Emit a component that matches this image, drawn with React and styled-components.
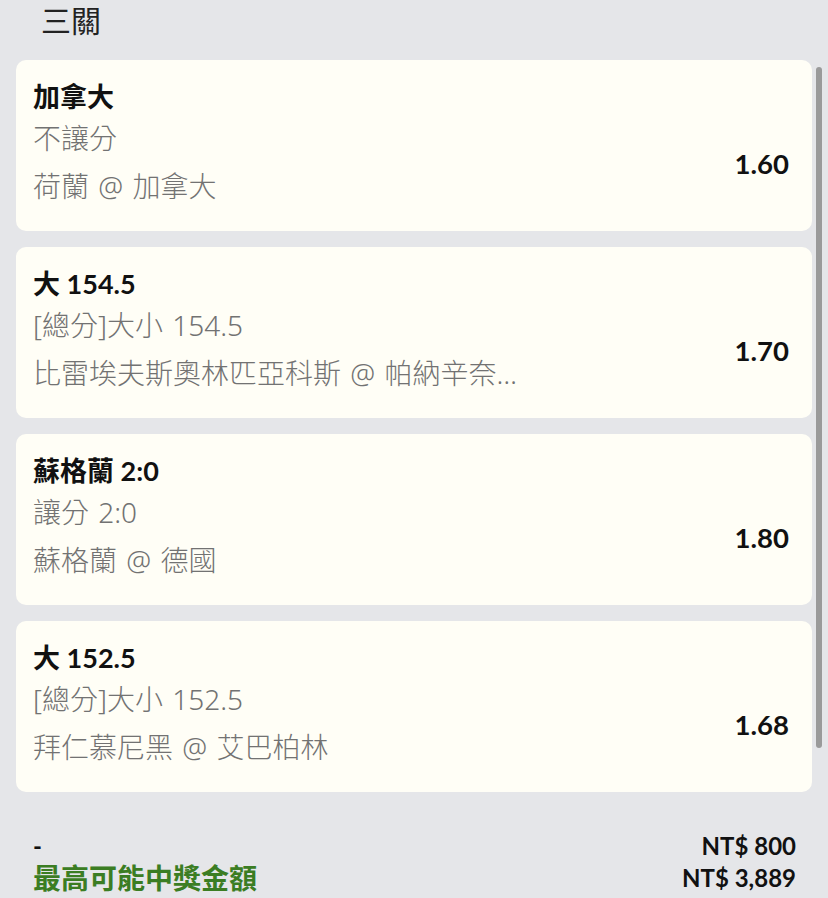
import React from "react";
import styled, { createGlobalStyle } from "styled-components";

const Global = createGlobalStyle`
  html, body { margin: 0; padding: 0; background: #e5e6e9; }
  body { font-family: "Lato", "Noto Sans CJK TC", sans-serif; overflow: hidden; }
`;

const Page = styled.div`
  position: relative;
  width: 828px;
  height: 898px;
  box-sizing: border-box;
  padding: 0 16px;
  background: #e5e6e9;
  overflow: hidden;
`;

const Title = styled.div`
  padding-left: 25px;
  height: 40px;
  line-height: 40px;
  font-size: 30px;
  color: #222;
  margin-bottom: 20px;
`;

const List = styled.div`
  display: flex;
  flex-direction: column;
  gap: 16px;
`;

const Card = styled.div`
  height: 171px;
  box-sizing: border-box;
  padding: 18px 23px 0 17px;
  background: #fffef6;
  border-radius: 10px;
  display: flex;
  flex-direction: column;
`;

const Selection = styled.div`
  font-size: 27px;
  font-weight: 700;
  line-height: 38px;
  color: #111;
`;

const Body = styled.div`
  display: flex;
  align-items: center;
  justify-content: space-between;
`;

const Info = styled.div`
  display: flex;
  flex-direction: column;
  gap: 4px;
  width: ${(p) => p.$w || 600}px;
`;

const Line = styled.div`
  font-family: "Noto Sans", "Noto Sans CJK TC", sans-serif;
  font-weight: 300;
  font-size: 28px;
  line-height: 44px;
  word-spacing: 2px;
  color: #727272;
  white-space: nowrap;
  overflow: hidden;
  text-overflow: ellipsis;
`;

const Odds = styled.div`
  font-size: 27.5px;
  font-weight: 700;
  color: #111;
  padding-top: 3px;
`;

const Summary = styled.div`
  margin-top: 37px;
  padding: 0 16px 0 17px;
  display: flex;
  flex-direction: column;
`;

const Row = styled.div`
  display: flex;
  justify-content: space-between;
  align-items: center;
  height: 32px;
`;

const Label = styled.div`
  font-size: ${(p) => (p.$green ? 28 : 24)}px;
  font-weight: 700;
  color: ${(p) => (p.$green ? "#3b7d23" : "#111")};
`;

const Amount = styled.div`
  font-size: 24px;
  font-weight: 700;
  color: #111;
`;

const Scrollbar = styled.div`
  position: absolute;
  right: 6px;
  top: 67px;
  width: 6px;
  height: 681px;
  border-radius: 3px;
  background: #9a9a9a;
`;

const bets = [
  { sel: "加拿大", market: "不讓分", match: "荷蘭 @ 加拿大", odds: "1.60" },
  { sel: "大 154.5", market: "[總分]大小 154.5", match: "比雷埃夫斯奧林匹亞科斯 @ 帕納辛奈科斯", odds: "1.70", w: 500 },
  { sel: "蘇格蘭 2:0", market: "讓分 2:0", match: "蘇格蘭 @ 德國", odds: "1.80" },
  { sel: "大 152.5", market: "[總分]大小 152.5", match: "拜仁慕尼黑 @ 艾巴柏林", odds: "1.68" },
];

export default function App() {
  return (
    <Page>
      <Global />
      <Title>三關</Title>
      <List>
        {bets.map((b, i) => (
          <Card key={i}>
            <Selection>{b.sel}</Selection>
            <Body>
              <Info $w={b.w}>
                <Line>{b.market}</Line>
                <Line>{b.match}</Line>
              </Info>
              <Odds>{b.odds}</Odds>
            </Body>
          </Card>
        ))}
      </List>
      <Summary>
        <Row>
          <Label>-</Label>
          <Amount>NT$ 800</Amount>
        </Row>
        <Row>
          <Label $green>最高可能中獎金額</Label>
          <Amount>NT$ 3,889</Amount>
        </Row>
      </Summary>
      <Scrollbar />
    </Page>
  );
}
